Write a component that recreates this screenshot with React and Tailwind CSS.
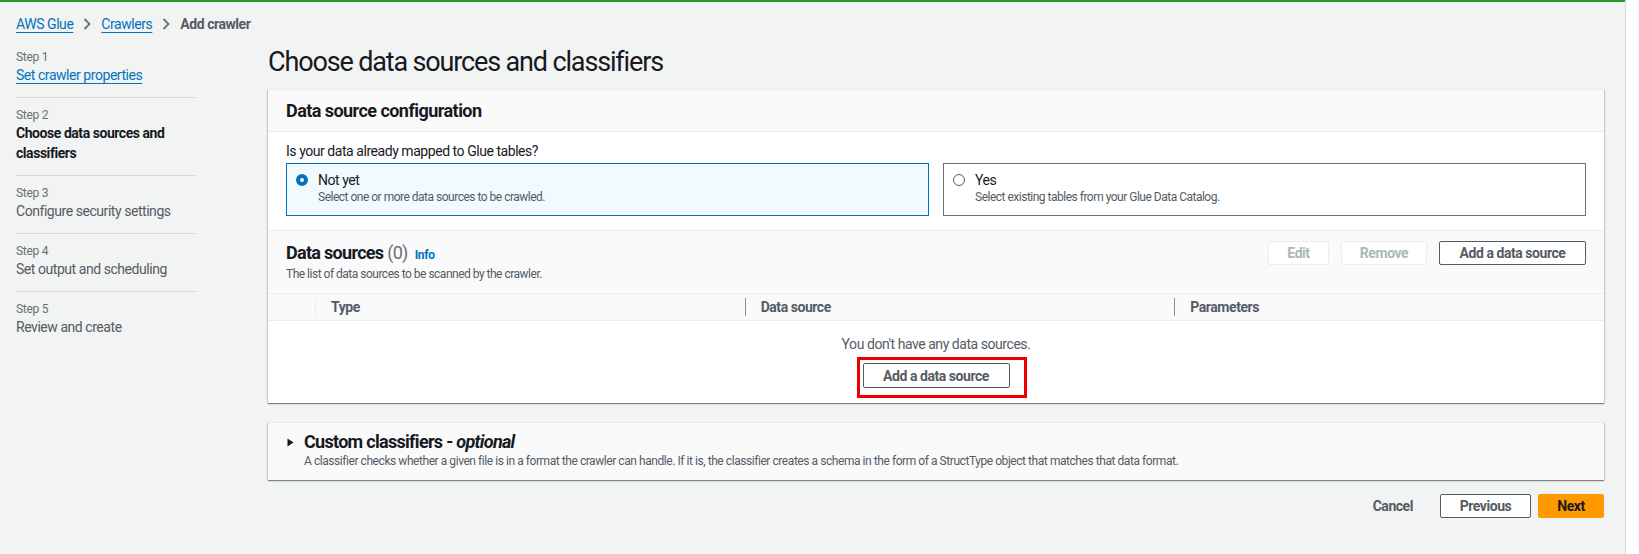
import React from "react";

const cardShadow =
  "shadow-[0_1px_1px_0_rgba(0,28,36,0.3),1px_1px_1px_0_rgba(0,28,36,0.15),-1px_1px_1px_0_rgba(0,28,36,0.15)]";

function Chevron() {
  return (
    <svg width="8" height="12" viewBox="0 0 8 12" className="mx-[10px] shrink-0">
      <polyline points="1.5,1 6.5,6 1.5,11" fill="none" stroke="#687078" strokeWidth="1.8" />
    </svg>
  );
}

function Breadcrumb() {
  return (
    <div className="mt-[12px] flex h-[20px] items-center pl-4 text-[14px] leading-[20px]">
      <a className="text-[#0073bb] underline underline-offset-[3px] decoration-1">AWS Glue</a>
      <Chevron />
      <a className="text-[#0073bb] underline underline-offset-[3px] decoration-1">Crawlers</a>
      <Chevron />
      <span className="font-bold text-[#545b64]">Add crawler</span>
    </div>
  );
}

function SideStep({ n, title, state, last }) {
  return (
    <div>
      <div className="text-[12px] leading-[16px] text-[#687078] tracking-[-0.3px]">Step {n}</div>
      <div
        className={
          "text-[14px] leading-[20px] " +
          (state === "link"
            ? "text-[#0073bb] underline underline-offset-[3px] decoration-1"
            : state === "current"
            ? "font-bold text-[#16191f] pr-4"
            : "text-[#545b64]")
        }
      >
        {title}
      </div>
      {!last && <div className="mt-[12px] mb-[9px] h-px bg-[#d5dbdb]" />}
    </div>
  );
}

function Sidebar() {
  return (
    <nav className="w-[180px] shrink-0 pt-[3px]">
      <SideStep n={1} title="Set crawler properties" state="link" />
      <SideStep n={2} title="Choose data sources and classifiers" state="current" />
      <SideStep n={3} title="Configure security settings" />
      <SideStep n={4} title="Set output and scheduling" />
      <SideStep n={5} title="Review and create" last />
    </nav>
  );
}

function RadioCard({ selected, label, desc }) {
  return (
    <div
      className={
        "flex gap-[10px] border pl-[9px] pt-[7px] pb-[10px] " +
        (selected ? "border-[#0073bb] bg-[#f1faff]" : "border-[#687078] bg-white")
      }
    >
      <div className="pt-[3px]">
        {selected ? (
          <div className="h-[12px] w-[12px] rounded-full border-[4px] border-[#0073bb] bg-white" />
        ) : (
          <div className="h-[12px] w-[12px] rounded-full border border-[#545b64] bg-white" />
        )}
      </div>
      <div>
        <div className="text-[14px] leading-[18px] text-[#16191f]">{label}</div>
        <div className="text-[12px] leading-[16px] text-[#545b64] tracking-[-0.5px]">{desc}</div>
      </div>
    </div>
  );
}

function Btn({ w, disabled, children, h = "h-[24px]" }) {
  return (
    <button
      className={
        w +
        " " +
        h +
        " flex items-center justify-center rounded-[2px] border bg-white text-[14px] font-bold leading-none " +
        (disabled ? "border-[#eaeded] text-[#aab7b8]" : "border-[#545b64] text-[#545b64]")
      }
    >
      {children}
    </button>
  );
}

function HeaderCell({ children, light }) {
  return (
    <div className="flex items-center">
      <div className={"h-[18px] w-px " + (light ? "bg-[#eaeded]" : "bg-[#879596]")} />
      <span className="ml-[15px] text-[14px] font-bold text-[#545b64]">{children}</span>
    </div>
  );
}

export default function App() {
  return (
    <div className="flex h-[554px] w-full overflow-hidden font-['Roboto',sans-serif] text-[14px] tracking-[-0.45px] text-[#16191f]">
      <div className="flex-1 border-t-2 border-[#2e9a2e] bg-[#f2f3f3]">
        <Breadcrumb />
        <div className="mt-[12px] flex pl-4 pr-[21px]">
          <Sidebar />
          <main className="ml-[72px] flex-1">
            <h1 className="text-[27px] leading-[32px] tracking-[-1.15px] text-[#16191f]">
              Choose data sources and classifiers
            </h1>

            <section className={"mt-[11px] border-t border-[#eaeded] bg-white " + cardShadow}>
              <div className="flex h-[42px] items-center border-b border-[#eaeded] bg-[#fafafa] px-[18px]">
                <h2 className="text-[18px] font-bold leading-[22px] tracking-[-0.55px]">Data source configuration</h2>
              </div>
              <div className="px-[18px] pt-[9px] pb-[14px]">
                <div className="leading-[20px]">Is your data already mapped to Glue tables?</div>
                <div className="mt-[2px] grid grid-cols-2 gap-[14px]">
                  <RadioCard selected label="Not yet" desc="Select one or more data sources to be crawled." />
                  <RadioCard label="Yes" desc="Select existing tables from your Glue Data Catalog." />
                </div>
              </div>

              <div className="border-t border-[#eaeded] bg-[#fafafa]">
                <div className="flex justify-between px-[18px] pt-[11px] pb-[11px]">
                  <div>
                    <div className="flex items-baseline">
                      <h2 className="text-[18px] font-bold leading-[22px] tracking-[-0.7px]">
                        Data sources <span className="font-normal text-[#687078]">(0)</span>
                      </h2>
                      <a className="ml-[7px] text-[12px] font-bold text-[#0073bb] tracking-[-0.3px]">Info</a>
                    </div>
                    <div className="mt-[2px] text-[12px] leading-[16px] text-[#545b64] tracking-[-0.5px]">
                      The list of data sources to be scanned by the crawler.
                    </div>
                  </div>
                  <div className="mt-[-1px] flex gap-[12px]">
                    <Btn w="w-[61px]" disabled>Edit</Btn>
                    <Btn w="w-[86px]" disabled>Remove</Btn>
                    <Btn w="w-[147px]">Add a data source</Btn>
                  </div>
                </div>
                <div className="grid h-[28px] grid-cols-[47px_1fr_1fr_1fr] border-y border-[#eaeded]">
                  <div />
                  <HeaderCell light>Type</HeaderCell>
                  <HeaderCell>Data source</HeaderCell>
                  <HeaderCell>Parameters</HeaderCell>
                </div>
              </div>

              <div className="flex flex-col items-center bg-white pt-[13px] pb-[15px]">
                <div className="leading-[20px] text-[#545b64]">You don't have any data sources.</div>
                <div className="relative mt-[9px]">
                  <Btn w="w-[147px]" h="h-[25px]">Add a data source</Btn>
                  <div className="pointer-events-none absolute -top-[6px] -left-[6px] -right-[17px] -bottom-[10px] border-[3px] border-[#ee0000]" />
                </div>
              </div>
            </section>

            <section className={"mt-[19px] border-t border-[#eaeded] bg-[#fafafa] pt-[8px] pb-[11px] " + cardShadow}>
              <div className="flex items-center pl-[19px]">
                <svg width="7" height="9" viewBox="0 0 7 9" className="shrink-0">
                  <polygon points="0.5,0.5 6.5,4.5 0.5,8.5" fill="#16191f" />
                </svg>
                <h2 className="ml-[10px] text-[18px] font-bold leading-[22px] tracking-[-0.7px]">
                  Custom classifiers - <i>optional</i>
                </h2>
              </div>
              <div className="pl-[36px] text-[12px] leading-[16px] text-[#545b64] tracking-[-0.44px]">
                A classifier checks whether a given file is in a format the crawler can handle. If it is, the classifier creates a schema in the form of a StructType object that matches that data format.
              </div>
            </section>

            <div className="mt-[14px] flex items-center justify-end">
              <button className="mr-[27px] text-[14px] font-bold text-[#545b64]">Cancel</button>
              <Btn w="w-[91px]">Previous</Btn>
              <button className="ml-[7px] flex h-[24px] w-[66px] items-center justify-center rounded-[2px] bg-[#ff9900] text-[14px] font-bold text-[#16191f]">
                Next
              </button>
            </div>
          </main>
        </div>
      </div>
      <div className="w-[14px] shrink-0 border-l border-[#d5dbdb] bg-white" />
    </div>
  );
}
